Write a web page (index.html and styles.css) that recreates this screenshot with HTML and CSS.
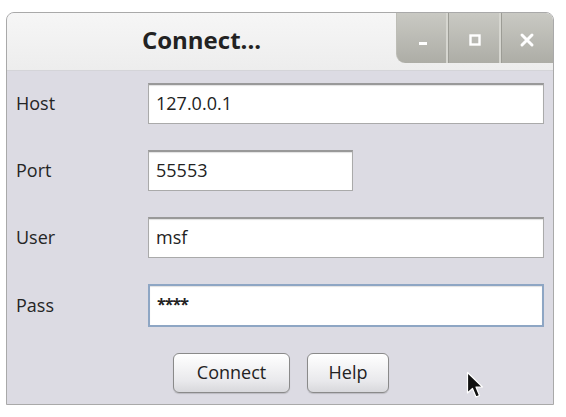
FILE: index.html
```html
<!DOCTYPE html>
<html>
<head>
<meta charset="utf-8">
<link rel="stylesheet" href="styles.css">
</head>
<body>
<div class="window">
  <div class="titlebar">
    <div class="title">Connect...</div>
    <div class="winbtns">
      <div class="wbtn">
        <svg width="14" height="14" viewBox="0 0 14 14"><rect x="3" y="9" width="8" height="3" fill="#fff"/></svg>
      </div>
      <div class="wbtn">
        <svg width="14" height="14" viewBox="0 0 14 14"><rect x="2.5" y="2.5" width="9" height="9" fill="none" stroke="#fff" stroke-width="2.4"/></svg>
      </div>
      <div class="wbtn">
        <svg width="16" height="16" viewBox="0 0 16 16"><path d="M3 3 L13 13 M13 3 L3 13" stroke="#fff" stroke-width="3" stroke-linecap="round"/></svg>
      </div>
    </div>
  </div>
  <div class="content">
    <div class="form">
      <label class="lbl">Host</label>
      <div class="field">127.0.0.1</div>
      <label class="lbl">Port</label>
      <div class="field short">55553</div>
      <label class="lbl">User</label>
      <div class="field">msf</div>
      <label class="lbl">Pass</label>
      <div class="field focus">****</div>
    </div>
    <div class="buttons">
      <div class="btn connect">Connect</div>
      <div class="btn help">Help</div>
    </div>
    <svg class="cursor" width="18" height="28" viewBox="0 0 18 28">
      <path d="M1.5 1.5 L1.5 22 L6.5 17.5 L10 26 L13.5 24.5 L10 16 L16.5 16 Z" fill="#111" stroke="#fff" stroke-width="1.2" stroke-linejoin="round"/>
    </svg>
  </div>
</div>
</body>
</html>
```
FILE: styles.css
```css
html, body {
  margin: 0;
  padding: 0;
  background: #ffffff;
}
body {
  font-family: "Open Sans", "DejaVu Sans", sans-serif;
  color: #2a2a2a;
}
.window {
  margin-left: 6px;
  margin-top: 12px;
  width: 546px;
  height: 391px;
  border: 1px solid #a9a9a9;
  border-radius: 8px 8px 0 0;
  background: #dcdbe3;
  overflow: hidden;
  position: relative;
}
.titlebar {
  height: 57px;
  display: flex;
  background: linear-gradient(#f6f6f6, #ededed);
  border-bottom: 1px solid #d4d4d8;
}
.title {
  flex: 1;
  text-align: center;
  font-weight: 700;
  font-size: 24px;
  line-height: 58px;
  color: #222;
  margin-top: -2px;
}
.winbtns {
  width: 156px;
  height: 50px;
  display: flex;
  background: linear-gradient(#c9c9c3, #adada6);
  border-radius: 0 0 0 9px;
  border-left: 1px solid #bdbdb6;
}
.wbtn {
  flex: 1;
  display: flex;
  align-items: center;
  justify-content: center;
  padding-top: 4px;
  border-right: 1px solid #9c9c95;
  box-shadow: inset -2px 0 0 #d6d6d0;
}
.wbtn:last-child {
  border-right: none;
  box-shadow: none;
}
.content {
  padding: 12px 9px 0 9px;
}
.form {
  display: grid;
  grid-template-columns: 132px 1fr;
  row-gap: 26px;
  align-items: center;
}
.lbl {
  font-size: 18px;
  color: #252525;
  padding-bottom: 2px;
}
.field {
  height: 41px;
  box-sizing: border-box;
  background: #fff;
  border: 1px solid #aaaaaa;
  border-top: 2px solid #999;
  box-shadow: inset 0 1px 1px rgba(0,0,0,0.12);
  font-size: 18px;
  line-height: 37px;
  padding-left: 7px;
  color: #222;
}
.field.short {
  width: 205px;
}
.field.focus {
  border: 2px solid #8ea6c4;
  height: 43px;
  line-height: 37px;
  font-weight: 700;
  letter-spacing: -1px;
  font-size: 16px;
}
.buttons {
  display: flex;
  gap: 17px;
  margin-top: 26px;
  padding-left: 157px;
}
.btn {
  height: 40px;
  box-sizing: border-box;
  border: 1px solid #8a8a8a;
  border-radius: 6px;
  background: linear-gradient(#ffffff, #e9e9ec 70%, #d8d8dc);
  box-shadow: 0 1px 1px rgba(0,0,0,0.15);
  font-size: 18px;
  line-height: 37px;
  text-align: center;
  color: #222;
}
.btn.connect {
  width: 117px;
}
.btn.help {
  width: 82px;
}
.cursor {
  position: absolute;
  left: 459px;
  top: 358px;
}
```
